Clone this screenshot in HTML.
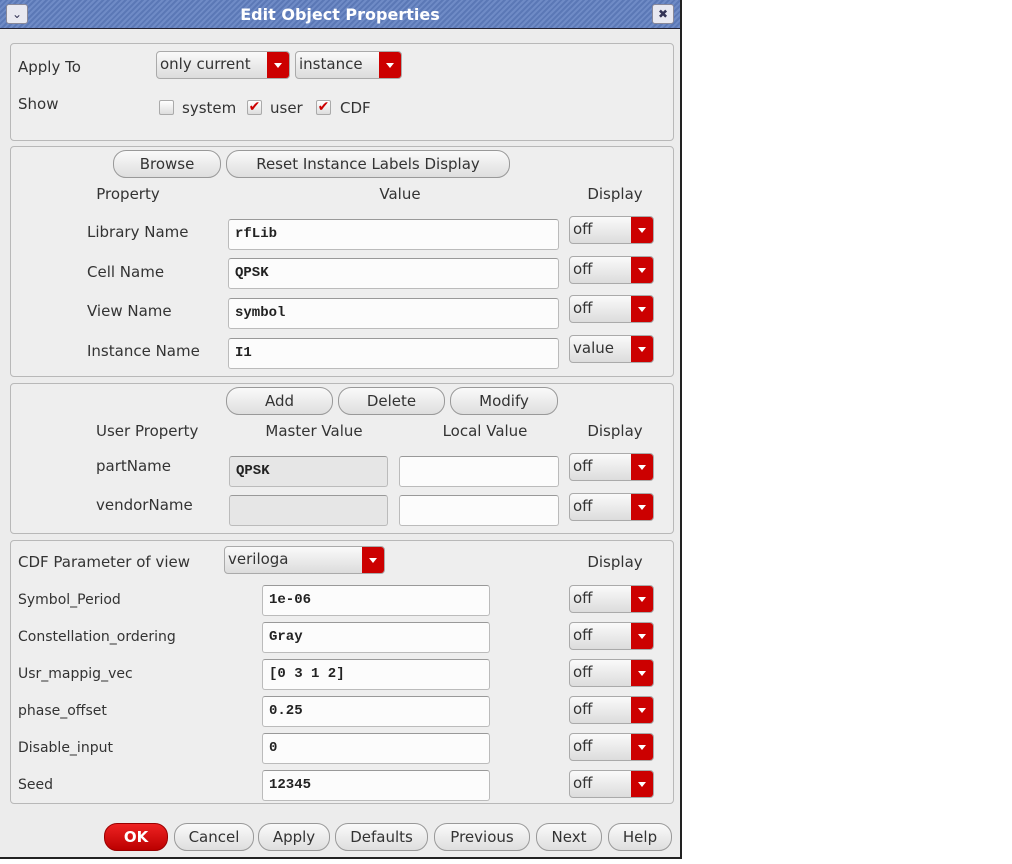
<!DOCTYPE html>
<html><head><meta charset="utf-8"><style>
*{box-sizing:border-box;margin:0;padding:0}
body{width:1012px;height:864px;background:#fff;position:relative;overflow:hidden;font-family:"DejaVu Sans","Liberation Sans",sans-serif;font-size:14px;color:#333}
.win{position:absolute;left:0;top:0;width:682px;height:859px;background:#ececec;border-right:2px solid #222;border-bottom:2px solid #222}
.title{position:absolute;left:0;top:0;width:680px;height:29px;background:repeating-linear-gradient(135deg,#5b78b6 0 2px,#6f8bc6 2px 4px);border-bottom:1px solid #223}
.title span{position:absolute;left:0;width:100%;text-align:center;top:5px;color:#fff;font-weight:bold;font-size:16px}
.tb{position:absolute;top:4px;width:22px;height:20px;background:#e8e8f0;border:1px solid #889;border-radius:3px;font-size:12px;text-align:center;line-height:18px;color:#335}
.panel{position:absolute;left:10px;width:664px;border:1px solid #b8b8b8;border-radius:4px;background:#eeeeee}
.t{position:absolute;white-space:nowrap;line-height:16px}
.c{text-align:center}
.btn{position:absolute;height:28px;border:1px solid #999;border-radius:13px;background:linear-gradient(#fafafa,#dedede);text-align:center;line-height:26px;font-size:15px;color:#333}
.combo{position:absolute;height:28px;border:1px solid #aaa;border-radius:4px;background:linear-gradient(#fafafa,#dcdcdc);font-size:15px;line-height:24px;padding-left:3px;overflow:hidden}
.combo i{position:absolute;right:0;top:0;bottom:0;width:22px;background:#c00;}
.combo i:after{content:"";position:absolute;left:7px;top:11px;border-left:4px solid transparent;border-right:4px solid transparent;border-top:5px solid #fff}
.f{position:absolute;height:31px;border:1px solid #bbb;border-top-color:#999;border-radius:3px;background:#fcfcfc;font-family:"Liberation Mono",monospace;font-weight:bold;font-size:14px;line-height:29px;padding-left:6px;color:#222}
.g{background:#e6e6e6}
.cb{position:absolute;width:15px;height:15px;border:1px solid #aaa;border-radius:2px;background:linear-gradient(#fff,#ddd);color:#c00;font-size:14px;line-height:13px;text-align:center;font-weight:bold}
</style></head><body>
<div class="win">
<div class="title"><span>Edit Object Properties</span></div>
<div class="tb" style="left:6px">&#8964;</div>
<div class="tb" style="left:652px">&#10006;</div>

<div class="panel" style="top:43px;height:98px"></div>
<div class="panel" style="top:146px;height:231px"></div>
<div class="panel" style="top:383px;height:151px"></div>
<div class="panel" style="top:540px;height:264px"></div>

<div class="t" style="left:18px;top:59px;font-size:15px">Apply To</div>
<div class="combo" style="left:156px;top:51px;width:134px">only current<i></i></div>
<div class="combo" style="left:295px;top:51px;width:107px">instance<i></i></div>
<div class="t" style="left:18px;top:96px;font-size:15px">Show</div>
<div class="cb" style="left:159px;top:100px"></div><div class="t" style="left:182px;top:100px;font-size:15px">system</div>
<div class="cb" style="left:247px;top:100px">&#10004;</div><div class="t" style="left:270px;top:100px;font-size:15px">user</div>
<div class="cb" style="left:316px;top:100px">&#10004;</div><div class="t" style="left:340px;top:100px;font-size:15px">CDF</div>

<div class="btn" style="left:113px;top:150px;width:108px">Browse</div>
<div class="btn" style="left:226px;top:150px;width:284px">Reset Instance Labels Display</div>
<div class="t c" style="left:78px;top:186px;width:100px;font-size:15px">Property</div>
<div class="t c" style="left:350px;top:186px;width:100px;font-size:15px">Value</div>
<div class="t c" style="left:565px;top:186px;width:100px;font-size:15px">Display</div>

<div class="t" style="left:87px;top:224px;font-size:15px">Library Name</div>
<div class="f" style="left:228px;top:219px;width:331px">rfLib</div>
<div class="combo" style="left:569px;top:216px;width:85px">off<i></i></div>
<div class="t" style="left:87px;top:264px;font-size:15px">Cell Name</div>
<div class="f" style="left:228px;top:258px;width:331px">QPSK</div>
<div class="combo" style="left:569px;top:256px;width:85px">off<i></i></div>
<div class="t" style="left:87px;top:303px;font-size:15px">View Name</div>
<div class="f" style="left:228px;top:298px;width:331px">symbol</div>
<div class="combo" style="left:569px;top:295px;width:85px">off<i></i></div>
<div class="t" style="left:87px;top:343px;font-size:15px">Instance Name</div>
<div class="f" style="left:228px;top:338px;width:331px">I1</div>
<div class="combo" style="left:569px;top:335px;width:85px">value<i></i></div>

<div class="btn" style="left:226px;top:387px;width:107px">Add</div>
<div class="btn" style="left:338px;top:387px;width:107px">Delete</div>
<div class="btn" style="left:450px;top:387px;width:108px">Modify</div>
<div class="t" style="left:96px;top:423px;font-size:15px">User Property</div>
<div class="t c" style="left:244px;top:423px;width:140px;font-size:15px">Master Value</div>
<div class="t c" style="left:415px;top:423px;width:140px;font-size:15px">Local Value</div>
<div class="t c" style="left:565px;top:423px;width:100px;font-size:15px">Display</div>
<div class="t" style="left:96px;top:458px;font-size:15px">partName</div>
<div class="f g" style="left:229px;top:456px;width:159px">QPSK</div>
<div class="f" style="left:399px;top:456px;width:160px"></div>
<div class="combo" style="left:569px;top:453px;width:85px">off<i></i></div>
<div class="t" style="left:96px;top:497px;font-size:15px">vendorName</div>
<div class="f g" style="left:229px;top:495px;width:159px"></div>
<div class="f" style="left:399px;top:495px;width:160px"></div>
<div class="combo" style="left:569px;top:493px;width:85px">off<i></i></div>

<div class="t" style="left:18px;top:554px;font-size:15px">CDF Parameter of view</div>
<div class="combo" style="left:224px;top:546px;width:161px">veriloga<i></i></div>
<div class="t c" style="left:565px;top:554px;width:100px;font-size:15px">Display</div>

<div class="t" style="left:18px;top:592px">Symbol_Period</div>
<div class="f" style="left:262px;top:585px;width:228px">1e-06</div>
<div class="combo" style="left:569px;top:585px;width:85px">off<i></i></div>
<div class="t" style="left:18px;top:629px">Constellation_ordering</div>
<div class="f" style="left:262px;top:622px;width:228px">Gray</div>
<div class="combo" style="left:569px;top:622px;width:85px">off<i></i></div>
<div class="t" style="left:18px;top:666px">Usr_mappig_vec</div>
<div class="f" style="left:262px;top:659px;width:228px">[0 3 1 2]</div>
<div class="combo" style="left:569px;top:659px;width:85px">off<i></i></div>
<div class="t" style="left:18px;top:703px">phase_offset</div>
<div class="f" style="left:262px;top:696px;width:228px">0.25</div>
<div class="combo" style="left:569px;top:696px;width:85px">off<i></i></div>
<div class="t" style="left:18px;top:740px">Disable_input</div>
<div class="f" style="left:262px;top:733px;width:228px">0</div>
<div class="combo" style="left:569px;top:733px;width:85px">off<i></i></div>
<div class="t" style="left:18px;top:777px">Seed</div>
<div class="f" style="left:262px;top:770px;width:228px">12345</div>
<div class="combo" style="left:569px;top:770px;width:85px">off<i></i></div>

<div class="btn" style="left:104px;top:823px;width:64px;background:linear-gradient(#e22,#b00);color:#fff;font-weight:bold;border-color:#900">OK</div>
<div class="btn" style="left:174px;top:823px;width:80px">Cancel</div>
<div class="btn" style="left:258px;top:823px;width:72px">Apply</div>
<div class="btn" style="left:335px;top:823px;width:93px">Defaults</div>
<div class="btn" style="left:434px;top:823px;width:96px">Previous</div>
<div class="btn" style="left:536px;top:823px;width:66px">Next</div>
<div class="btn" style="left:608px;top:823px;width:64px">Help</div>
</div>
</body></html>
